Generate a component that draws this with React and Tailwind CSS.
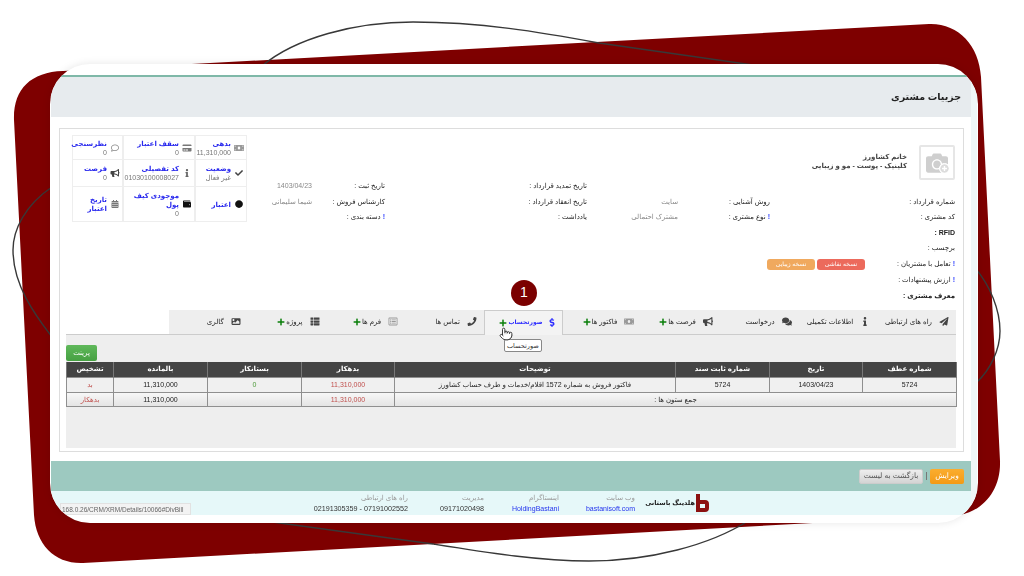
import React from 'react';
import { Pointer } from 'lucide-react';
import {
  FaBullhorn, FaCalendarAlt, FaCamera, FaCheck, FaCircle, FaComments, FaCreditCard, FaDollarSign, FaImage,
  FaInfo, FaMoneyBill, FaPaperPlane, FaPhone, FaPlus, FaPlusCircle, FaRegComment, FaRegListAlt, FaThList, FaWallet,
} from 'react-icons/fa';

const tabs = [
  { title: 'راه های ارتباطی', icon: FaPaperPlane },
  { title: 'اطلاعات تکمیلی', icon: FaInfo },
  { title: 'درخواست', icon: FaComments },
  { title: 'فرصت ها', icon: FaBullhorn, plus: true },
  { title: 'فاکتور ها', icon: FaMoneyBill, plus: true, light: true },
  { title: 'صورتحساب', icon: FaDollarSign, plus: true, active: true },
  { title: 'تماس ها', icon: FaPhone },
  { title: 'فرم ها', icon: FaRegListAlt, plus: true, light: true },
  { title: 'پروژه', icon: FaThList, plus: true },
  { title: 'گالری', icon: FaImage },
];

const stats = [
  [
    { title: 'بدهی', value: '11,310,000', icon: FaMoneyBill, color: 'text-[#999]' },
    { title: 'سقف اعتبار', value: '0', icon: FaCreditCard, color: 'text-[#777]' },
    { title: 'نظرسنجی', value: '0', icon: FaRegComment, color: 'text-[#888]' },
  ],
  [
    { title: 'وضعیت', value: 'غیر فعال', icon: FaCheck, color: 'text-[#444]' },
    { title: 'کد تفصیلی', value: '01030100008027', icon: FaInfo, color: 'text-[#666]' },
    { title: 'فرصت', value: '0', icon: FaBullhorn, color: 'text-[#444]' },
  ],
  [
    { title: 'اعتبار', icon: FaCircle, color: 'text-[#111]' },
    { title: 'موجودی کیف پول', value: '0', icon: FaWallet, color: 'text-[#111]' },
    { title: 'تاریخ اعتبار', icon: FaCalendarAlt, color: 'text-[#777]' },
  ],
];

const Label = ({ children, hint, bold }) => (
  <span className={`whitespace-nowrap text-[#222] ${bold ? 'font-bold' : ''}`}>
    {hint && <span className="ml-[2px] font-bold text-[#3344ff]">!</span>}
    {children}
  </span>
);

const Value = ({ children }) => <span className="whitespace-nowrap text-[#888]">{children}</span>;

const Th = ({ children }) => <th className="border-x border-[#777] text-[7px] font-bold text-white">{children}</th>;

const Td = ({ children, className = '', ...rest }) => (
  <td className={`border border-[#8f8f8f] text-center text-[7px] ${className}`} {...rest}>{children}</td>
);

const FooterItem = ({ label, value, link, width }) => (
  <div className={`flex flex-col items-start ${width}`}>
    <span className="text-[7px] leading-[10px] text-[#999]">{label}</span>
    <span className={`whitespace-nowrap leading-[11px] ${link ? 'text-[7px] text-[#2233ee]' : 'text-[7.2px] text-[#333]'}`}>{value}</span>
  </div>
);

export default function App() {
  return (
    <div className="relative h-[576px] w-[1024px] overflow-hidden bg-white font-['Liberation_Sans','DejaVu_Sans',sans-serif]">
      {/* red backdrop and the thin curves */}
      <svg className="absolute inset-0" width="1024" height="576" viewBox="0 0 1024 576" fill="none">
        <path d="M14 120C13 90 30 72 63 71L929 24C958 23 979 45 981 77L1000 461C1001 488 985 510 960 515L83 563C55 564 36 545 34 515Z" fill="#7e0000" />
        <g stroke="#383838" strokeWidth="1.4">
          <path d="M262 66C295 38 355 22 413 22C480 22 540 32 599 43L760 66" />
          <path d="M52 187C25 205 13 230 13 250C13 285 35 315 52 337" />
          <path d="M975 268C990 285 1000 310 1000 331C1000 350 990 370 977 382" />
          <path d="M265 521L433 544C490 553 540 561 589 561C650 561 710 545 748 521" />
        </g>
      </svg>

      <div dir="rtl" className="relative ml-[50px] mt-[64px] h-[459px] w-[928px] overflow-hidden rounded-[40px] bg-white pt-[11px] shadow-[0_0_8px_rgba(0,0,0,0.1)]">
        <div className="ml-[1px] mr-[1px] border-r-[6px] border-[#eff6f7] blur-[0.6px]">
          <div className="flex h-[42px] items-center border-t-2 border-[#7fb8a8] bg-[#e7ebee] pr-[10px] text-[9.5px] font-bold text-[#222]">
            جزییات مشتری
          </div>

          <div className="ml-[8px] mr-[7px] mt-[11px] h-[324px] border border-[#ddd] bg-white">
            <div className="flex h-[96px]">
              <div className="flex-1 text-[7px]">
                <div className="flex h-[49.5px] items-start gap-[12px] pr-[8px] pt-[16px]">
                  <div className="relative flex h-[35px] w-[36px] shrink-0 items-center justify-center rounded-[2px] border-2 border-[#e6e6e6]">
                    <FaCamera className="h-[22px] w-[26px] text-[#cfcfcf]" />
                    <FaPlusCircle className="absolute bottom-[4px] right-[3px] h-[11px] w-[11px] rounded-full border border-white bg-white text-[#dcdcdc]" />
                  </div>
                  <div className="pt-[7px] text-[7px] font-bold leading-[9px] text-[#444]">
                    <div>خانم کشاورز</div>
                    <div>کلینیک - پوست - مو و زیبایی</div>
                  </div>
                </div>
                <div className="grid auto-rows-[15.7px] grid-cols-[185px_92px_91px_202px_73px_1fr] items-center pr-[8px]">
                  <span /><span /><span />
                  <Label>تاریخ تمدید قرارداد :</Label>
                  <Label>تاریخ ثبت :</Label>
                  <Value>1403/04/23</Value>

                  <Label>شماره قرارداد :</Label>
                  <Label>روش آشنایی :</Label>
                  <Value>سایت</Value>
                  <Label>تاریخ انعقاد قرارداد :</Label>
                  <Label>کارشناس فروش :</Label>
                  <Value>شیما سلیمانی</Value>

                  <Label>کد مشتری :</Label>
                  <Label hint>نوع مشتری :</Label>
                  <Value>مشترک احتمالی</Value>
                  <Label>یادداشت :</Label>
                  <Label hint>دسته بندی :</Label>
                  <span />
                </div>
              </div>

              <div className="ml-[12px] mt-[6px] h-[87px] w-[175px] shrink-0">
                {stats.map((row, i) => (
                  <div key={i} className={`grid grid-cols-[52px_72px_51px] border-b border-[#eee] ${i === 0 ? 'h-[25px] border-t' : i === 1 ? 'h-[27px]' : 'h-[35px]'}`}>
                    {row.map((cell) => {
                      const Icon = cell.icon;
                      return (
                        <div key={cell.title} className="flex items-center gap-[3px] border-x border-[#eee] px-[2px] text-[7px] leading-[9px]">
                          <Icon className={`h-[8px] w-[10px] shrink-0 ${cell.color}`} />
                          <div className="min-w-0 flex-1">
                            <div className="font-bold text-[#2a2aee]">{cell.title}</div>
                            {cell.value && <div className="text-[#777]">{cell.value}</div>}
                          </div>
                        </div>
                      );
                    })}
                  </div>
                ))}
              </div>
            </div>

            <div className="pr-[8px] text-[7px]">
              <div className="flex h-[15.8px] items-center"><Label bold>RFID :</Label></div>
              <div className="flex h-[15.8px] items-center"><Label>برچسب :</Label></div>
              <div className="flex h-[15.8px] items-center">
                <div className="w-[90px]"><Label hint>تعامل با مشتریان :</Label></div>
                <div className="flex gap-[2px]">
                  <span className="flex h-[11px] w-[48px] items-center justify-center rounded-[3px] bg-[#ec6a5c] text-[6px] text-white">نسخه نقاشی</span>
                  <span className="flex h-[11px] w-[48px] items-center justify-center rounded-[3px] bg-[#f0a95e] text-[6px] text-white">نسخه زیبایی</span>
                </div>
              </div>
              <div className="flex h-[15.8px] items-center"><Label hint>ارزش پیشنهادات :</Label></div>
              <div className="flex h-[15.8px] items-center"><Label bold>معرف مشتری :</Label></div>
            </div>

            <div className="ml-[6px] mr-[7px] mt-[6px] border-b border-[#ccc]">
              <div className="flex h-[24px] w-[787px] bg-[#eeeeee]">
                {tabs.map((tab) => {
                  const Icon = tab.icon;
                  return (
                    <div
                      key={tab.title}
                      className={`relative flex w-[78.7px] items-center ${tab.active ? '-mb-px h-[25px] gap-[4px] border-x border-t border-[#ccc] bg-[#f3f3f3] pr-[5px] text-[6px] font-bold text-[#2a2aff]' : 'h-[24px] gap-[7px] pr-[7px] text-[7px] text-[#222]'}`}
                    >
                      <Icon className={`h-[9px] w-[10px] shrink-0 ${tab.active ? 'text-[#2a2aff]' : tab.light ? 'text-[#999]' : 'text-[#444]'}`} />
                      <span className="whitespace-nowrap">{tab.title}</span>
                      {tab.plus && <FaPlus className={`h-[8px] w-[8px] shrink-0 text-[#0a7f0a] ${tab.active ? '-mr-[2px]' : '-mr-[6px]'}`} />}
                      {tab.active && (
                        <>
                          <span className="absolute left-[26px] top-[-31px] flex h-[26px] w-[26px] items-center justify-center rounded-full bg-[#7b0000] text-[14px] font-normal text-white">1</span>
                          <span className="absolute left-[19px] top-[28px] flex h-[13px] w-[38px] items-center justify-center rounded-[2px] border border-[#888] bg-white text-[6.5px] font-normal text-[#333]">صورتحساب</span>
                          <Pointer className="absolute left-[14px] top-[16px] h-[14px] w-[14px] fill-white text-[#222]" strokeWidth={1.5} />
                        </>
                      )}
                    </div>
                  );
                })}
              </div>
            </div>

            <div className="ml-[6px] mr-[7px] flex h-[113px] flex-col items-end bg-[#eeeeee] pt-[10px]">
              <button className="h-[16px] w-[31px] rounded-[2px] bg-gradient-to-b from-[#5fb85a] to-[#46a042] text-[7px] text-white">پرینت</button>
              <table className="mt-[1px] w-[890px] table-fixed border-collapse">
                <colgroup>
                  <col className="w-[94px]" />
                  <col className="w-[93px]" />
                  <col className="w-[94px]" />
                  <col className="w-[281px]" />
                  <col className="w-[93px]" />
                  <col className="w-[94px]" />
                  <col className="w-[94px]" />
                  <col className="w-[47px]" />
                </colgroup>
                <thead>
                  <tr className="h-[16px] bg-[#444]">
                    <Th>شماره عطف</Th>
                    <Th>تاریخ</Th>
                    <Th>شماره ثابت سند</Th>
                    <Th>توضیحات</Th>
                    <Th>بدهکار</Th>
                    <Th>بستانکار</Th>
                    <Th>بالمانده</Th>
                    <Th>تشخیص</Th>
                  </tr>
                </thead>
                <tbody>
                  <tr className="h-[15px] bg-[#f0f0f0] text-[#222]">
                    <Td>5724</Td>
                    <Td>1403/04/23</Td>
                    <Td>5724</Td>
                    <Td>فاکتور فروش به شماره 1572 اقلام/خدمات و طرف حساب کشاورز</Td>
                    <Td className="text-[#c0504d]">11,310,000</Td>
                    <Td className="text-[#4d9a3a]">0</Td>
                    <Td>11,310,000</Td>
                    <Td className="text-[#c0504d]">بد</Td>
                  </tr>
                  <tr className="h-[14px] bg-gradient-to-b from-[#f7f7f7] to-[#e3e3e3] text-[#222]">
                    <Td colSpan={4}>جمع ستون ها :</Td>
                    <Td className="text-[#c0504d]">11,310,000</Td>
                    <Td />
                    <Td>11,310,000</Td>
                    <Td className="text-[#c0504d]">بدهکار</Td>
                  </tr>
                </tbody>
              </table>
            </div>
          </div>

          <div className="mt-[9px] flex h-[30px] items-center gap-[3px] bg-[#9dc9c0] pr-[7px]">
            <button className="h-[15px] w-[34px] rounded-[2px] bg-gradient-to-b from-[#fbad2e] to-[#f39a14] text-[7.5px] text-white">ویرایش</button>
            <span className="h-[8px] w-px bg-[#777]" />
            <button className="h-[15px] w-[64px] rounded-[2px] border border-[#ccc] bg-gradient-to-b from-[#eeeeee] to-[#d4d4d4] text-[7.5px] text-[#555]">بازگشت به لیست</button>
          </div>

          <div className="relative flex h-[24px] items-center bg-[#e6f8f9] pr-[262px]">
            <svg width="13" height="18" viewBox="0 0 13 18" className="shrink-0">
              <path d="M0 0h4v6h5a4 4 0 0 1 4 4v4a4 4 0 0 1-4 4H0zM4 10v4h5v-4z" fill="#8c1111" fillRule="evenodd" />
            </svg>
            <span className="mr-[1px] w-[60px] whitespace-nowrap text-[6.5px] font-bold text-[#222]">هلدینگ باستانی</span>
            <FooterItem label="وب سایت" value="bastanisoft.com" link width="w-[76px]" />
            <FooterItem label="اینستاگرام" value="HoldingBastani" link width="w-[75px]" />
            <FooterItem label="مدیریت" value="09171020498" width="w-[76px]" />
            <FooterItem label="راه های ارتباطی" value="07191002552 - 02191305359" width="w-[95px]" />
            <div dir="ltr" className="absolute bottom-0 left-[9px] h-[12px] w-[131px] overflow-hidden border border-[#e2e2e2] bg-[#f3f3f3] pl-[1px] text-[6.5px] leading-[11px] text-[#666]">
              168.0.26/CRM/XRM/Details/10066#DivBill
            </div>
          </div>
        </div>
      </div>
    </div>
  );
}
